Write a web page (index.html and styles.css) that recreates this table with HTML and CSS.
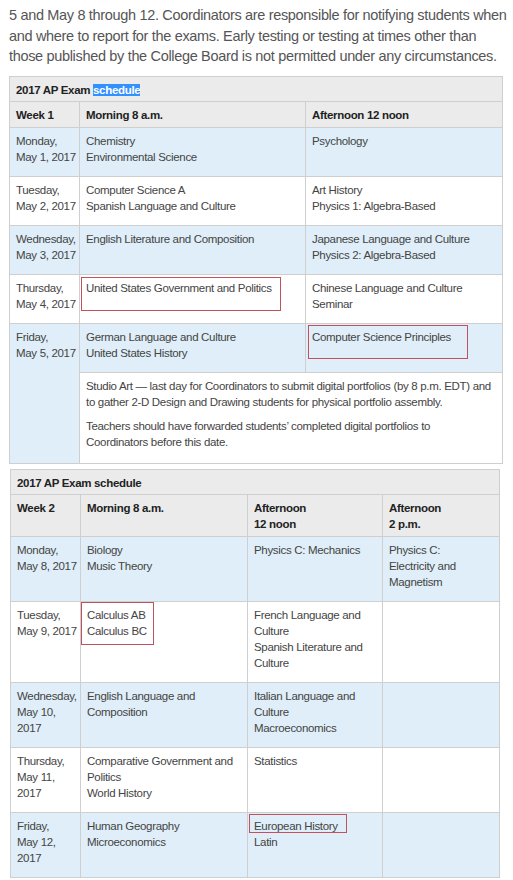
FILE: index.html
```html
<!DOCTYPE html>
<html>
<head>
<meta charset="utf-8">
<link rel="stylesheet" href="styles.css">
</head>
<body>
<p class="intro">5 and May 8 through 12. Coordinators are responsible for notifying students when<br>and where to report for the exams. Early testing or testing at times other than<br>those published by the College Board is not permitted under any circumstances.</p>

<table class="sched t1">
  <colgroup><col class="c1"><col class="c2a"><col class="c3a"></colgroup>
  <tr class="cap"><th colspan="3">2017 AP Exam <span class="sel">schedule</span></th></tr>
  <tr class="head"><th>Week 1</th><th>Morning 8 a.m.</th><th>Afternoon 12 noon</th></tr>
  <tr class="blue"><td>Monday,<br>May 1, 2017</td><td>Chemistry<br>Environmental Science</td><td>Psychology</td></tr>
  <tr><td>Tuesday,<br>May 2, 2017</td><td>Computer Science A<br>Spanish Language and Culture</td><td>Art History<br>Physics 1: Algebra-Based</td></tr>
  <tr class="blue"><td>Wednesday,<br>May 3, 2017</td><td>English Literature and Composition</td><td>Japanese Language and Culture<br>Physics 2: Algebra-Based</td></tr>
  <tr><td>Thursday,<br>May 4, 2017</td><td>United States Government and Politics<span class="mark m1"></span></td><td>Chinese Language and Culture<br>Seminar</td></tr>
  <tr class="blue"><td rowspan="2">Friday,<br>May 5, 2017</td><td>German Language and Culture<br>United States History</td><td>Computer Science Principles<span class="mark m2"></span></td></tr>
  <tr><td colspan="2" class="studio"><p>Studio Art — last day for Coordinators to submit digital portfolios (by 8 p.m. EDT) and<br>to gather 2-D Design and Drawing students for physical portfolio assembly.</p><p>Teachers should have forwarded students’ completed digital portfolios to<br>Coordinators before this date.</p></td></tr>
</table>

<table class="sched t2">
  <colgroup><col class="c1"><col class="c2b"><col class="c3b"><col class="c4b"></colgroup>
  <tr class="cap"><th colspan="4">2017 AP Exam schedule</th></tr>
  <tr class="head"><th>Week 2</th><th>Morning 8 a.m.</th><th>Afternoon<br>12 noon</th><th>Afternoon<br>2 p.m.</th></tr>
  <tr class="blue"><td>Monday,<br>May 8, 2017</td><td>Biology<br>Music Theory</td><td>Physics C: Mechanics</td><td>Physics C:<br>Electricity and<br>Magnetism</td></tr>
  <tr><td>Tuesday,<br>May 9, 2017</td><td>Calculus AB<br>Calculus BC<span class="mark m3"></span></td><td>French Language and<br>Culture<br>Spanish Literature and<br>Culture</td><td></td></tr>
  <tr class="blue"><td>Wednesday,<br>May 10,<br>2017</td><td>English Language and<br>Composition</td><td>Italian Language and<br>Culture<br>Macroeconomics</td><td></td></tr>
  <tr><td>Thursday,<br>May 11,<br>2017</td><td>Comparative Government and<br>Politics<br>World History</td><td>Statistics</td><td></td></tr>
  <tr class="blue"><td>Friday,<br>May 12,<br>2017</td><td>Human Geography<br>Microeconomics</td><td>European History<span class="mark m4"></span><br>Latin</td><td></td></tr>
</table>
</body>
</html>
```

FILE: styles.css
```css
body {
  margin: 0;
  padding: 5px 0 0 0;
  background: #ffffff;
  font-family: "Liberation Sans", Arial, sans-serif;
}

.intro {
  margin: 0 0 9.5px 9px;
  font-size: 14.5px;
  letter-spacing: -0.33px;
  line-height: 20.5px;
  color: #555555;
  white-space: nowrap;
}

.sched {
  border-collapse: collapse;
  table-layout: fixed;
  font-size: 11.5px;
  line-height: 16px;
  letter-spacing: -0.32px;
  color: #444444;
}

.sched td,
.sched th {
  border: 1px solid #cfcfcf;
  padding: 5px 5px 11px 6px;
  vertical-align: top;
  text-align: left;
  white-space: nowrap;
  position: relative;
}

.sched td {
  background: #ffffff;
}

.sched th {
  background: #ebebeb;
  font-weight: bold;
  color: #222222;
}

.sched .cap th {
  padding: 5px 6px 3px;
}

.sched .head th {
  padding: 5px 5px 4px 6px;
}

.sched .blue td {
  background: #dfeef8;
}

.sched td.studio {
  background: #ffffff;
  padding-bottom: 5px;
}

.studio p {
  margin: 0 0 8px;
}

.sel {
  background: #3390ff;
  color: #ffffff;
}

.t1 {
  width: 493px;
  margin-left: 9px;
}

.t2 {
  width: 489px;
  margin: 5px 0 0 10px;
}

.t1 .c1,
.t2 .c1 {
  width: 70px;
}

.c2a { width: 226px; }
.c3a { width: 197px; }
.c2b { width: 167px; }
.c3b { width: 135px; }
.c4b { width: 117px; }

.mark {
  position: absolute;
  box-sizing: border-box;
  border: 1px solid #c0525e;
}

.m1 { left: 1px; top: 2px; width: 200px; height: 34px; }
.m2 { left: 2px; top: 1px; width: 160px; height: 34px; }
.m3 { left: 0; top: 0; width: 73px; height: 43px; }
.m4 { left: 1px; top: 1px; width: 98px; height: 19px; }
```
